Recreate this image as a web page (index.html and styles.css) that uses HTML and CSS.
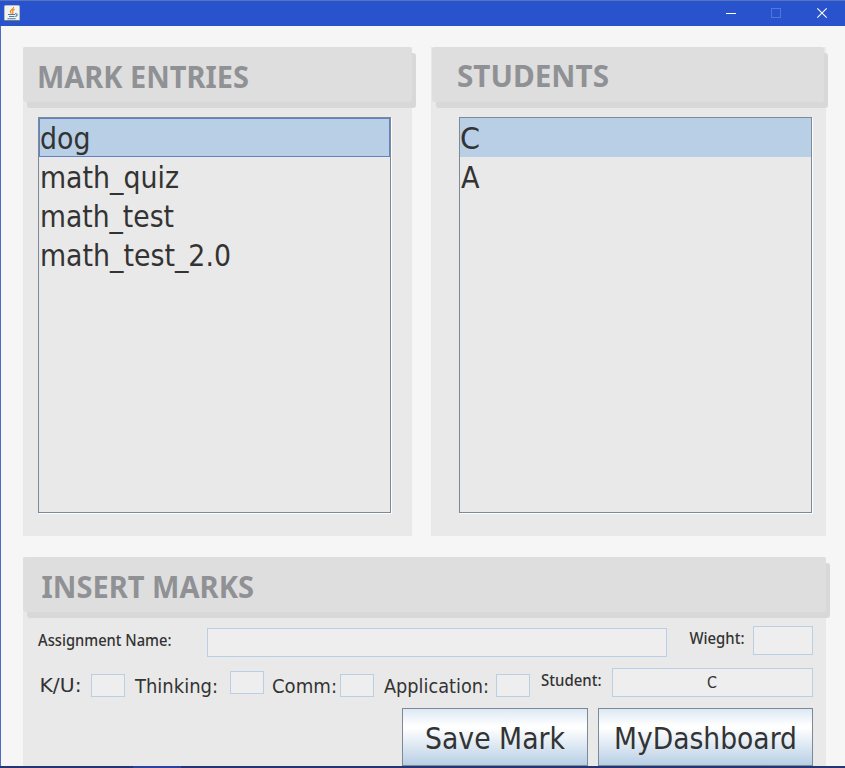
FILE: index.html
```
<!DOCTYPE html>
<html lang="en">
<head>
<meta charset="utf-8">
<title>Marks</title>
<link rel="stylesheet" href="styles.css">
</head>
<body>
<div class="window">
  <header class="titlebar">
    <svg class="java" width="16" height="16" viewBox="0 0 16 16">
      <rect x=".5" y=".5" width="15" height="15" rx="1" fill="#f3f3ef" stroke="#aebfc8"/>
      <path d="M.5 15.5h15" stroke="#667f83"/>
      <path d="M9.5 2C10 4 6 5 6.3 7l1.2 1.5M10.7 4.3C8.5 5.3 8 6.2 9 7.2L8.5 8.7" fill="none" stroke="#ed8424" stroke-width="1.2"/>
      <path d="M4 9.5h7M5 11.5h5.5M3.5 13.7h8.2M11 8.8c3-.5 2.8 2 .2 2.7" fill="none" stroke="#507b9d" stroke-width="1.1"/>
    </svg>
    <svg class="controls" width="102" height="12" viewBox="0 0 102 12">
      <path d="M0 6.5h10" stroke="#fff"/>
      <rect x="45.5" y="1.5" width="9" height="9" fill="none" stroke="#5574dc"/>
      <path d="M91.3 1.3l9.4 9.4M100.7 1.3l-9.4 9.4" stroke="#fff" stroke-width="1.1"/>
    </svg>
  </header>
  <main class="content">
    <div class="lists">
      <section class="panel entries">
        <div class="heading"><svg class="title" width="380" height="55"><text x="14" y="41" textLength="212" lengthAdjust="spacingAndGlyphs">MARK ENTRIES</text></svg></div>
        <div class="list">
          <div class="item selected focused"><svg class="big" width="340" height="39"><text x="1" y="31" textLength="50.5" lengthAdjust="spacingAndGlyphs">dog</text></svg></div>
          <div class="item"><svg class="big" width="340" height="39"><text x="0" y="31" textLength="139" lengthAdjust="spacingAndGlyphs">math_quiz</text></svg></div>
          <div class="item"><svg class="big" width="340" height="39"><text x="0" y="31" textLength="134" lengthAdjust="spacingAndGlyphs">math_test</text></svg></div>
          <div class="item"><svg class="big" width="340" height="39"><text x="0" y="31" textLength="191" lengthAdjust="spacingAndGlyphs">math_test_2.0</text></svg></div>
        </div>
      </section>
      <section class="panel students">
        <div class="heading"><svg class="title" width="380" height="55"><text x="25" y="39.5" textLength="152" lengthAdjust="spacingAndGlyphs">STUDENTS</text></svg></div>
        <div class="list">
          <div class="item selected"><svg class="big" width="340" height="39"><text x="-1" y="31" textLength="20" lengthAdjust="spacingAndGlyphs">C</text></svg></div>
          <div class="item"><svg class="big" width="340" height="39"><text x="0" y="31" textLength="18.5" lengthAdjust="spacingAndGlyphs">A</text></svg></div>
        </div>
      </section>
    </div>
    <section class="panel insert">
      <div class="heading"><svg class="title" width="780" height="55"><text x="18.5" y="40.5" textLength="212.5" lengthAdjust="spacingAndGlyphs">INSERT MARKS</text></svg></div>
      <div class="row name-row">
        <svg class="small" width="169" height="29"><text x="0" y="20" textLength="133.5" lengthAdjust="spacingAndGlyphs">Assignment Name:</text></svg>
        <div class="field name"></div>
        <svg class="small" width="86" height="29"><text x="22.5" y="18" textLength="55" lengthAdjust="spacingAndGlyphs">Wieght:</text></svg>
        <div class="field weight"></div>
      </div>
      <div class="row marks-row">
        <svg class="medium" width="53" height="32"><text x="1.5" y="24" textLength="42" lengthAdjust="spacingAndGlyphs">K/U:</text></svg>
        <div class="field mark"></div>
        <svg class="medium" width="105" height="32"><text x="10" y="25" textLength="83" lengthAdjust="spacingAndGlyphs">Thinking:</text></svg>
        <div class="field mark raised"></div>
        <svg class="medium" width="76" height="32"><text x="8" y="25" textLength="65" lengthAdjust="spacingAndGlyphs">Comm:</text></svg>
        <div class="field mark"></div>
        <svg class="medium" width="122" height="32"><text x="10" y="25" textLength="105" lengthAdjust="spacingAndGlyphs">Application:</text></svg>
        <div class="field mark"></div>
        <svg class="small" width="82" height="29"><text x="11" y="18" textLength="60.5" lengthAdjust="spacingAndGlyphs">Student:</text></svg>
        <div class="field student"><svg class="value" width="12" height="27"><text x="0" y="19" textLength="10" lengthAdjust="spacingAndGlyphs">C</text></svg></div>
      </div>
      <div class="row buttons">
        <div class="button save"><svg class="big" width="184" height="56"><text x="22" y="40" textLength="140" lengthAdjust="spacingAndGlyphs">Save Mark</text></svg></div>
        <div class="button dash"><svg class="big" width="213" height="56"><text x="15" y="40" textLength="183" lengthAdjust="spacingAndGlyphs">MyDashboard</text></svg></div>
      </div>
    </section>
  </main>
  <footer class="strip"><span class="strip-active"></span></footer>
</div>
</body>
</html>
```
FILE: styles.css
```
* { box-sizing: border-box; }
body { margin: 0; overflow: hidden; }
svg { display: block; flex: none; overflow: visible; }
.window { width: 845px; height: 768px; display: flex; flex-direction: column; background: #f6f6f6; }
.titlebar { height: 26px; flex: none; display: flex; justify-content: space-between; padding: 4px 17px 0 4px; background: #2952cd; border-top: 1px solid #5775be; }
.controls { margin-top: 2px; }
.content { height: 740px; flex: none; padding: 21px 0 0 22px; border-left: 1px solid #4c6bc1; overflow: hidden; }
.lists { display: flex; gap: 19px; height: 489px; }
.panel { background: #e9e9e9; }
.entries { width: 389px; }
.students { width: 395px; }
.heading { height: 55px; background: #dedede; border-radius: 3px; box-shadow: 4px 6px 0 #d8d8d8; }
.entries .heading { width: 389px; }
.students .heading { width: 392px; margin-left: 1px; }
.list { width: 353px; height: 396px; margin: 15px 0 0 15px; border: 1px solid #7a8a99; box-shadow: 1px 1px 0 #fff; }
.students .list { margin-left: 28px; }
.item { height: 39px; padding-left: 1px; }
.selected { background: #b8cfe5; }
.focused { border: 1px solid #6382bf; padding-left: 0; }
.focused svg { margin: -1px 0 0 -1px; }
text { font-family: "DejaVu Sans", sans-serif; fill: #333; }
.title text { font-family: "Noto Sans", sans-serif; font-size: 30px; font-weight: 700; fill: #909195; }
.big text { font-size: 30px; }
.medium text { font-size: 20px; }
.small text { font-family: "Noto Sans", sans-serif; font-size: 16px; font-weight: 500; }
.value text { font-size: 15px; }
.insert { width: 803px; height: 209px; margin-top: 21px; }
.row { display: flex; align-items: flex-start; }
.name-row { height: 56px; padding: 14px 0 0 15px; }
.field { border: 1px solid #b8cfe5; background: #eee; flex: none; }
.name { width: 460px; height: 29px; margin-top: 2px; }
.weight { width: 60px; height: 29px; }
.marks-row { height: 40px; padding-left: 15px; }
.mark { width: 34px; height: 23px; margin-top: 6px; }
.raised { margin-top: 3px; }
.student { width: 201px; height: 29px; display: flex; justify-content: center; }
.buttons { gap: 10px; padding-left: 379px; }
.button { height: 58px; border: 1px solid #7a8a99; background: linear-gradient(#dde8f3 0, #fff 30%, #fff 34%, #b8cfe5 100%); }
.save { width: 186px; }
.dash { width: 215px; }
.strip { height: 2px; background: #26356f; padding-left: 133px; }
.strip-active { display: block; width: 48px; height: 2px; background: #2c43a0; }
```
